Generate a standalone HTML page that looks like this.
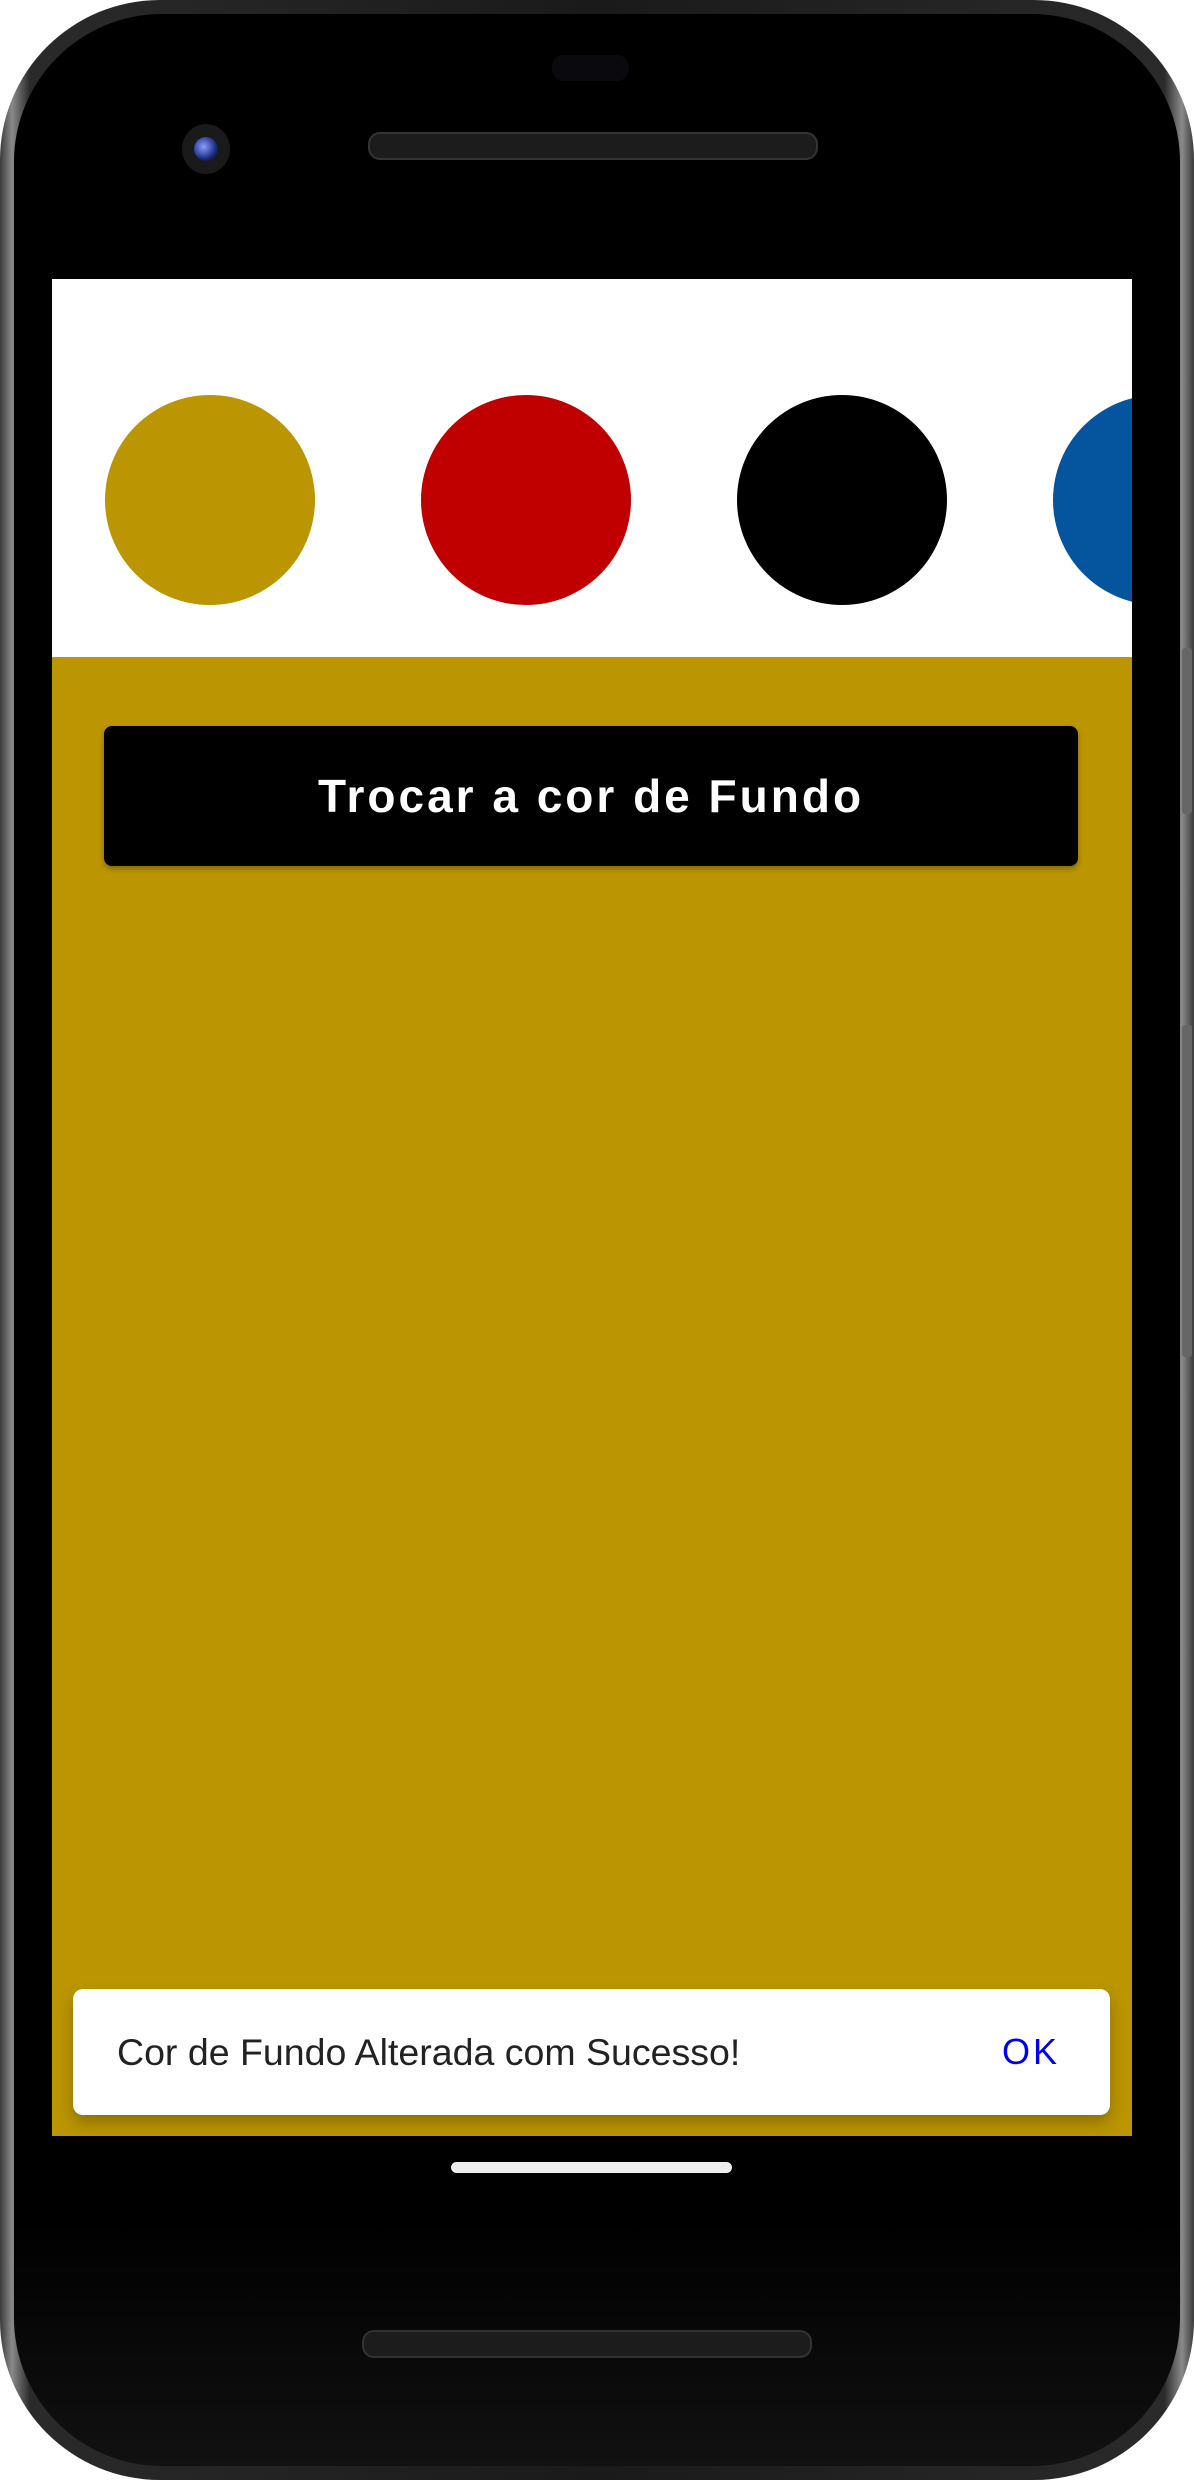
<!DOCTYPE html>
<html><head><style>
html,body{margin:0;padding:0;background:#fff;}
body{width:1194px;height:2480px;position:relative;overflow:hidden;font-family:"Liberation Sans",sans-serif;}
.phone{position:absolute;left:0;top:0;width:1194px;height:2480px;border-radius:160px;background:linear-gradient(90deg,#3a3a3a,#8a8a8a 1%,#2a2a2a 2.5%,#1a1a1a 50%,#2a2a2a 97.5%,#8a8a8a 99%,#3a3a3a);}
.inner{position:absolute;left:14px;top:14px;right:14px;bottom:14px;border-radius:148px;background:linear-gradient(#000 90%,#111);}
.screen{position:absolute;left:52px;top:279px;width:1080px;height:1857px;background:#bb9602;overflow:hidden;}
.top{position:absolute;left:0;top:0;width:1080px;height:378px;background:#fff;}
.c{position:absolute;top:116px;width:210px;height:210px;border-radius:50%;}
.btn{position:absolute;left:52px;top:447px;width:974px;height:140px;background:#000;border-radius:8px;box-shadow:0 3px 6px rgba(0,0,0,.3);color:#fff;font-weight:bold;font-size:46px;letter-spacing:3px;text-align:center;line-height:140px;}
.snack{position:absolute;left:21px;top:1710px;width:1037px;height:126px;background:#fff;border-radius:10px;box-shadow:0 8px 16px rgba(0,0,0,.25);}
.snack .t{position:absolute;left:44px;top:0;line-height:126px;font-size:37.5px;color:#222;}
.snack .ok{position:absolute;left:929px;top:0;line-height:126px;font-size:36px;color:#0000ee;letter-spacing:3px;}
.home{position:absolute;left:451px;top:2162px;width:281px;height:11px;border-radius:6px;background:#eee;}
.spk{position:absolute;height:24px;border-radius:12px;background:#1c1c1c;border:2px solid #333;}
.side{position:absolute;left:1182px;width:10px;background:#666;border-radius:3px;}
</style></head><body>
<div class="phone"></div>
<div class="side" style="top:648px;height:166px"></div>
<div class="side" style="top:1025px;height:332px"></div>
<div class="inner"></div>
<div style="position:absolute;left:552px;top:55px;width:77px;height:26px;border-radius:12px;background:#0a0a0e"></div>
<div style="position:absolute;left:182px;top:124px;width:48px;height:50px;border-radius:50%;background:#1a1a1a;"><div style="position:absolute;left:12px;top:13px;width:24px;height:24px;border-radius:50%;background:radial-gradient(circle at 40% 40%,#8aa0ff,#1a2a80 60%,#000)"></div></div>
<div class="spk" style="left:368px;top:132px;width:446px;"></div>
<div class="spk" style="left:362px;top:2330px;width:446px;"></div>
<div class="screen">
<div class="top">
<div class="c" style="left:53px;background:#bb9602"></div>
<div class="c" style="left:369px;background:#c00000"></div>
<div class="c" style="left:685px;background:#000"></div>
<div class="c" style="left:1001px;background:#04559e"></div>
</div>
<div class="btn">Trocar a cor de Fundo</div>
<div class="snack"><span class="t">Cor de Fundo Alterada com Sucesso!</span><span class="ok">OK</span></div>
</div>
<div class="home"></div>
</body></html>
